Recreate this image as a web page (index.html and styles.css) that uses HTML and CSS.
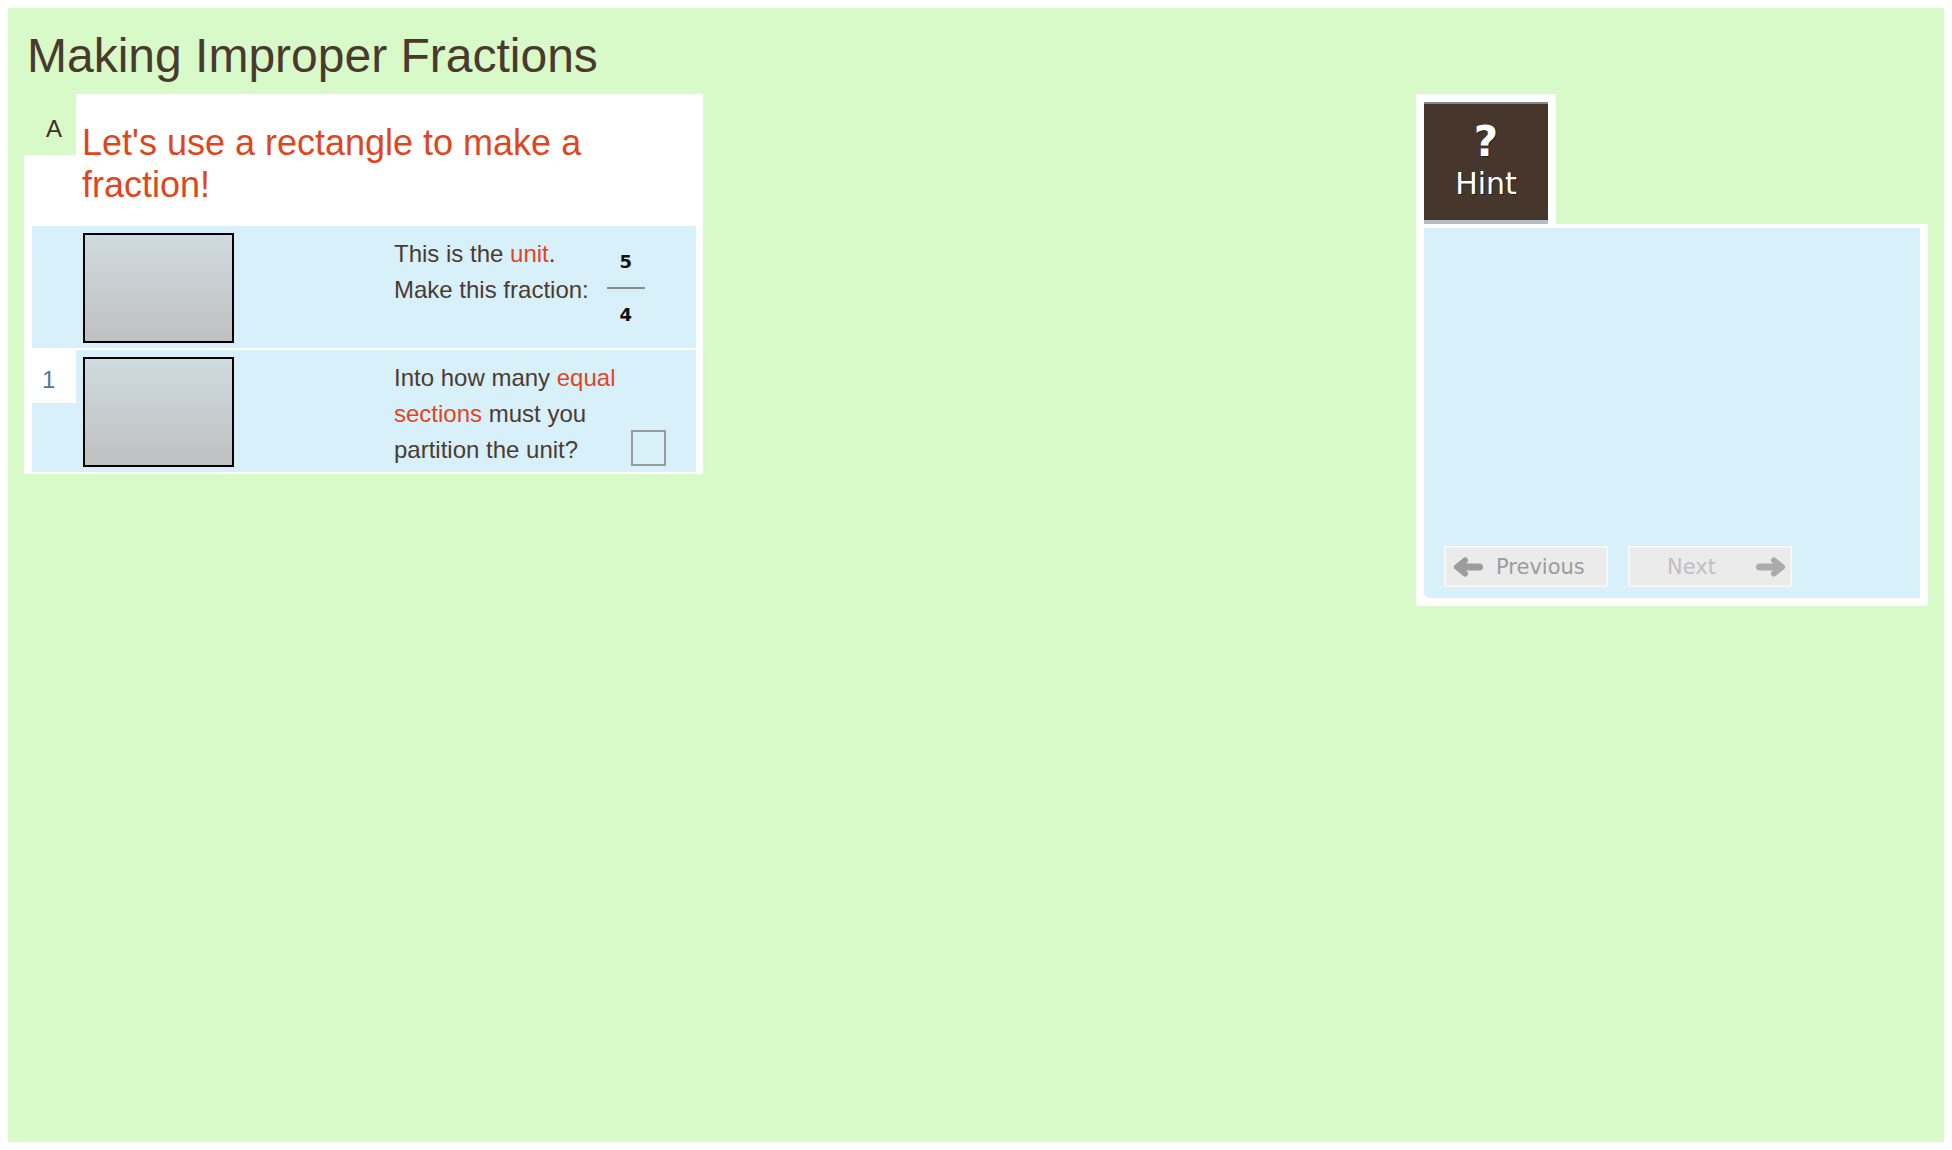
FILE: index.html
```html
<!DOCTYPE html>
<html lang="en">
<head>
<meta charset="utf-8">
<title>Making Improper Fractions</title>
<link rel="stylesheet" href="styles.css">
</head>
<body>
<div class="stage">
  <h1 class="title">Making Improper Fractions</h1>
  <div class="workspace">
    <div class="left-col">
      <div class="card">
        <div class="card-head">
          <div class="step-col">
            <div class="step-label">A</div>
            <div class="step-fill"></div>
          </div>
          <div class="prompt">Let's use a rectangle to make a fraction!</div>
        </div>
        <div class="card-body">
          <div class="row">
            <div class="row-label"></div>
            <div class="row-media"><div class="unit-rect"></div></div>
            <div class="row-text">
              <div class="lines">
                <div>This is the <span class="hl">unit</span>.</div>
                <div>Make this fraction:</div>
              </div>
              <div class="fraction">
                <span class="num">5</span>
                <span class="bar"></span>
                <span class="den">4</span>
              </div>
            </div>
          </div>
          <div class="row">
            <div class="row-label"><div class="num-cell">1</div></div>
            <div class="row-media"><div class="unit-rect"></div></div>
            <div class="row-text">
              <div class="lines lines-fixed">
                <div>Into how many <span class="hl">equal</span></div>
                <div><span class="hl">sections</span> must you</div>
                <div>partition the unit?</div>
              </div>
              <div class="answer"></div>
            </div>
          </div>
        </div>
      </div>
      <div class="scroll-edge"></div>
    </div>

    <div class="hint-panel">
      <div class="hint-tab">
        <div class="hint-btn">
          <div class="q">?</div>
          <div class="hint-word">Hint</div>
        </div>
      </div>
      <div class="hint-body">
        <div class="hint-area">
          <div class="nav-btn nav-prev">
            <svg class="arrow" viewBox="0 0 30 20" width="30" height="20" aria-hidden="true">
              <path d="M26.5 10H7" stroke="currentColor" stroke-width="7" stroke-linecap="round" fill="none"/>
              <path d="M12 3.5L4 10l8 6.5" stroke="currentColor" stroke-width="6" stroke-linecap="round" stroke-linejoin="round" fill="none"/>
            </svg>
            <span>Previous</span>
          </div>
          <div class="nav-btn nav-next">
            <span>Next</span>
            <svg class="arrow" viewBox="0 0 30 20" width="30" height="20" aria-hidden="true">
              <path d="M3.5 10H23" stroke="currentColor" stroke-width="7" stroke-linecap="round" fill="none"/>
              <path d="M18 3.5L26 10l-8 6.5" stroke="currentColor" stroke-width="6" stroke-linecap="round" stroke-linejoin="round" fill="none"/>
            </svg>
          </div>
        </div>
      </div>
    </div>
  </div>
</div>
</body>
</html>
```
FILE: styles.css
```css
html, body {
  margin: 0;
  padding: 0;
}

body {
  margin: 8px;
  background: #ffffff;
  font-family: "Liberation Sans", Arial, sans-serif;
}

.stage {
  background: #d8f9c8;
  height: 1134px;
  box-sizing: border-box;
  padding: 20px 16px 0;
}

.title {
  margin: 0 0 11px 3px;
  font-weight: normal;
  font-size: 48px;
  line-height: 55px;
  color: #4a3a2e;
}

.workspace {
  display: flex;
  justify-content: space-between;
  align-items: flex-start;
}

/* ---------- left problem card ---------- */
.left-col {
  display: flex;
  align-items: flex-end;
}

.card {
  width: 679px;
}

.card-head {
  display: grid;
  grid-template-columns: 52px 627px;
}

.step-col {
  display: flex;
  flex-direction: column;
}

.step-label {
  height: 61px;
  box-sizing: border-box;
  padding: 17px 0 0 22px;
  font-size: 24px;
  line-height: 36px;
  color: #3d2f27;
}

.step-fill {
  flex: 1;
  background: #ffffff;
}

.prompt {
  background: #ffffff;
  padding: 28px 20px 20px 6px;
  font-size: 36px;
  line-height: 42px;
  color: #e0461e;
}

.card-body {
  background: #ffffff;
  padding: 0 7px 2px 8px;
  display: flex;
  flex-direction: column;
  gap: 2px;
}

.row {
  display: grid;
  grid-template-columns: 44px 318px 1fr;
  height: 122px;
  background: #d8f0fa;
}

.num-cell {
  height: 53px;
  box-sizing: border-box;
  background: #ffffff;
  padding: 12px 0 0 10px;
  font-size: 24px;
  line-height: 36px;
  color: #4a7a9a;
}

.unit-rect {
  margin: 7px 0 0 7px;
  width: 151px;
  height: 110px;
  box-sizing: border-box;
  border: 2px solid #000000;
  background: linear-gradient(#cfdbe0, #c0c0c0);
}

.row-text {
  display: flex;
  align-items: flex-start;
  padding-top: 10px;
  box-sizing: border-box;
  font-size: 24px;
  line-height: 36px;
  color: #4a3c34;
}

.hl {
  color: #e0461e;
}

.lines-fixed {
  width: 230px;
}

.fraction {
  display: flex;
  flex-direction: column;
  width: 38px;
  margin: 14.7px 0 0 18px;
  font-family: "DejaVu Sans", sans-serif;
  font-size: 18px;
  font-weight: bold;
  line-height: 21px;
  color: #111111;
  text-align: center;
}

.bar {
  height: 2px;
  background: #8a8a8a;
  margin: 15.6px 0 14.4px;
}

.answer {
  align-self: flex-end;
  width: 35px;
  height: 36px;
  box-sizing: border-box;
  border: 2px solid #9a9a9a;
  margin: 0 0 6px 7px;
}

.scroll-edge {
  width: 1px;
  height: 122px;
  margin: 0 0 1px 8px;
  background: #e9eee6;
}

/* ---------- hint panel ---------- */
.hint-panel {
  width: 512px;
}

.hint-tab {
  width: 140px;
  box-sizing: border-box;
  background: #ffffff;
  padding: 8px 8px 0;
}

.hint-btn {
  height: 122px;
  box-sizing: border-box;
  border-top: 2px solid #808b8f;
  border-bottom: 4px solid #b3bec6;
  background: #47362c;
  color: #ffffff;
  font-family: "DejaVu Sans", sans-serif;
  text-align: center;
  padding-top: 18px;
  text-shadow: 1px 1px 0 rgba(0, 0, 0, 0.45);
}

.q {
  font-size: 42px;
  font-weight: bold;
  line-height: 40px;
}

.hint-word {
  margin-top: 6px;
  font-size: 30px;
  line-height: 32px;
}

.hint-body {
  background: #ffffff;
  padding: 4px 8px 8px;
}

.hint-area {
  height: 370px;
  box-sizing: border-box;
  background: #d8f0fa;
  border-radius: 0 0 0 6px;
  display: flex;
  align-items: flex-end;
  gap: 20px;
  padding: 0 0 11px 20px;
}

.nav-btn {
  width: 164px;
  height: 41px;
  box-sizing: border-box;
  border: 2px solid #f6f6f6;
  background: #ebebeb;
  display: flex;
  align-items: center;
  font-family: "DejaVu Sans", sans-serif;
  font-size: 21px;
}

.nav-prev {
  padding-left: 7px;
  gap: 13px;
  color: #9c9c9c;
}

.nav-next {
  padding: 0 4px 0 37px;
  color: #c0c0c0;
}

.nav-next .arrow {
  margin-left: auto;
  color: #ababab;
}
```
